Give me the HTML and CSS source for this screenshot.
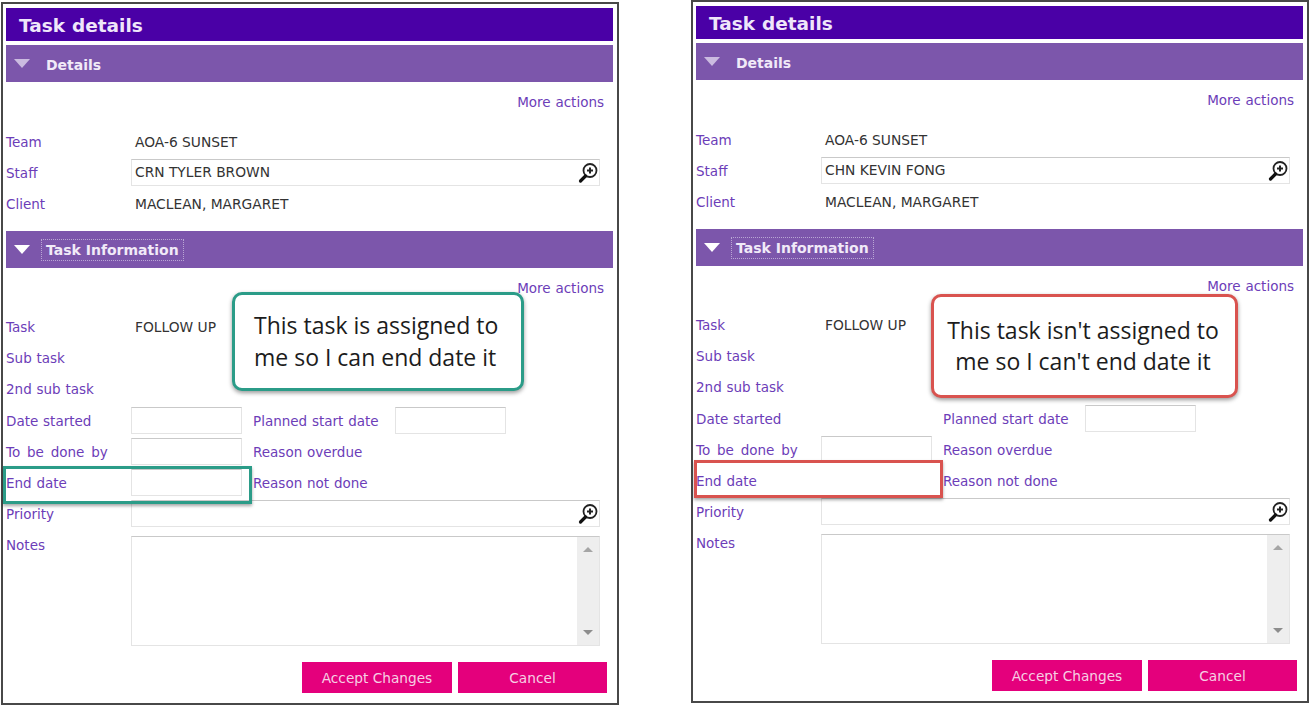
FILE: index.html
```html
<!DOCTYPE html>
<html lang="en">
<head>
  <meta charset="UTF-8"/>
  <title>Task details</title>
  <link rel="stylesheet" href="styles.css">
</head>
<body>

  <svg class="defs" width="0" height="0">
    <symbol id="lookup" viewBox="0 0 22 22">
      <circle cx="13" cy="8.5" r="6.5" fill="#fff" stroke="#222" stroke-width="1.8"/>
      <path d="M13 5.5v6M10 8.5h6" stroke="#222" stroke-width="2"/>
      <path d="M8.5 14L3.5 19" stroke="#111" stroke-width="3.2" stroke-linecap="round"/>
    </symbol>
  </svg>

  <div class="panel panel-left">
    <h1 class="title-bar">Task details</h1>
    <div class="section-bar muted"><span class="arrow"></span><span class="section-name">Details</span></div>
    <div class="more">More actions</div>
    <div class="block-top">
      <div class="row"><span class="label">Team</span><span class="value">AOA-6 SUNSET</span></div>
      <div class="row"><span class="label">Staff</span><div class="field">CRN TYLER BROWN<svg class="lookup"><use href="#lookup"/></svg></div></div>
      <div class="row"><span class="label">Client</span><span class="value">MACLEAN, MARGARET</span></div>
    </div>
    <div class="section-bar"><span class="arrow"></span><span class="section-name focus">Task Information</span></div>
    <div class="more">More actions</div>
    <div class="block-task">
      <div class="row"><span class="label">Task</span><span class="value">FOLLOW UP</span></div>
      <div class="row"><span class="label">Sub task</span></div>
      <div class="row"><span class="label">2nd sub task</span></div>
      <div class="row dates-start"><span class="label">Date started</span><div class="date"></div><span class="label second">Planned start date</span><div class="date"></div></div>
      <div class="row"><span class="label wide-words">To be done by</span><div class="date"></div><span class="label second">Reason overdue</span></div>
      <div class="row"><span class="label">End date</span><div class="date"></div><span class="label second">Reason not done</span></div>
      <div class="row"><span class="label">Priority</span><div class="field"><svg class="lookup"><use href="#lookup"/></svg></div></div>
      <div class="row notes-row"><span class="label">Notes</span>
        <div class="notes"><div class="scroll"><span class="up"></span><span class="down"></span></div></div>
      </div>
    </div>
    <div class="actions"><button class="btn accept">Accept Changes</button><button class="btn cancel">Cancel</button></div>
    <div class="callout green">This task is assigned to<br>me so I can end date it</div>
    <div class="highlight green"></div>
  </div>

  <div class="panel panel-right">
    <h1 class="title-bar">Task details</h1>
    <div class="section-bar muted"><span class="arrow"></span><span class="section-name">Details</span></div>
    <div class="more">More actions</div>
    <div class="block-top">
      <div class="row"><span class="label">Team</span><span class="value">AOA-6 SUNSET</span></div>
      <div class="row"><span class="label">Staff</span><div class="field">CHN KEVIN FONG<svg class="lookup"><use href="#lookup"/></svg></div></div>
      <div class="row"><span class="label">Client</span><span class="value">MACLEAN, MARGARET</span></div>
    </div>
    <div class="section-bar"><span class="arrow"></span><span class="section-name focus">Task Information</span></div>
    <div class="more">More actions</div>
    <div class="block-task">
      <div class="row"><span class="label">Task</span><span class="value">FOLLOW UP</span></div>
      <div class="row"><span class="label">Sub task</span></div>
      <div class="row"><span class="label">2nd sub task</span></div>
      <div class="row dates-start"><span class="label">Date started</span><div class="date blank"></div><span class="label second">Planned start date</span><div class="date"></div></div>
      <div class="row"><span class="label wide-words">To be done by</span><div class="date"></div><span class="label second">Reason overdue</span></div>
      <div class="row"><span class="label">End date</span><div class="date blank"></div><span class="label second">Reason not done</span></div>
      <div class="row"><span class="label">Priority</span><div class="field"><svg class="lookup"><use href="#lookup"/></svg></div></div>
      <div class="row notes-row"><span class="label">Notes</span>
        <div class="notes"><div class="scroll"><span class="up"></span><span class="down"></span></div></div>
      </div>
    </div>
    <div class="actions"><button class="btn accept">Accept Changes</button><button class="btn cancel">Cancel</button></div>
    <div class="callout red">This task isn't assigned to<br>me so I can't end date it</div>
    <div class="highlight red"></div>
  </div>

</body>
</html>
```

FILE: styles.css
```css
:root {
  --title: #4a00a6;
  --section: #7c56ab;
  --link: #6c3db8;
  --ink: #333333;
  --pink: #e4007c;
  --line: #e4e4e4;
  --line-top: #c9c9c9;
  --green: #2b9c88;
  --red: #d9534f;
}
* { box-sizing: border-box; margin: 0; padding: 0 }
html, body { height: 706px; overflow: hidden }
body {
  background: #fff;
  display: flex;
  gap: 72px;
  padding-left: 1px;
  font-family: "DejaVu Sans", sans-serif;
  font-size: 13.5px;
  word-spacing: .5px;
  color: var(--ink);
}
.defs { position: absolute }
.panel {
  position: relative;
  width: 618px;
  height: 703px;
  flex: none;
  padding: 4px 4px 0 3px;
  border: 2px solid #484848;
}
.panel-left { margin-top: 2px }

.title-bar {
  height: 33px;
  padding-left: 13px;
  background: var(--title);
  color: #efe6fa;
  font-size: 18.5px;
  font-weight: 700;
  line-height: 35px;
}
.section-bar {
  height: 37px;
  margin-top: 4px;
  background: var(--section);
  display: flex;
  align-items: center;
  color: #f1eaf8;
  font-size: 14px;
  font-weight: 700;
  word-spacing: 0;
}
.muted .section-name { padding-top: 2px }
.arrow {
  width: 0; height: 0;
  margin-left: 8px;
  margin-right: 16px;
  border-left: 8px solid transparent;
  border-right: 8px solid transparent;
  border-top: 9px solid #fff;
}
.muted .arrow { border-top-color: #cbbbe0 }
.section-name.focus {
  margin-left: -5px;
  padding: 2px 4px;
  border: 1px dotted #b9a6d4;
}

.more {
  height: 31px;
  padding-right: 9px;
  margin-top: 4px;
  color: var(--link);
  text-align: right;
  line-height: 32px;
}
.block-top { margin-top: 9px; margin-bottom: 12px }
.block-task { margin-top: 8px }
.row {
  height: 31px;
  display: flex;
  align-items: center;
}
.dates-start { margin-top: 1px }
.label {
  width: 125px;
  flex: none;
  color: var(--link);
}
.label.wide-words { word-spacing: 2.5px }
.label.second { width: 142px; margin-left: 11px }
.value { padding-left: 4px; font-size: 13.8px; word-spacing: 0 }
.field {
  position: relative;
  width: 469px;
  height: 27px;
  padding-left: 3px;
  border: 1px solid var(--line);
  border-top-color: var(--line-top);
  font-size: 13.8px;
  word-spacing: 0;
  line-height: 25px;
}
.lookup {
  position: absolute;
  top: 2px;
  right: 0;
  width: 22px;
  height: 22px;
}
.date {
  width: 111px;
  height: 27px;
  flex: none;
  border: 1px solid var(--line);
  border-top-color: var(--line-top);
}
.date.blank { border-color: transparent }
.notes-row { height: 118px; align-items: flex-start; padding-top: 7px }
.notes-row .label { margin-top: 1px }
.notes {
  position: relative;
  width: 469px;
  height: 110px;
  border: 1px solid var(--line);
  border-top-color: var(--line-top);
}
.scroll {
  position: absolute;
  top: 0; right: 0; bottom: 0;
  width: 22px;
  background: #eeeeee;
}
.up, .down {
  position: absolute;
  left: 6px;
  width: 0; height: 0;
  border-left: 5px solid transparent;
  border-right: 5px solid transparent;
}
.up { top: 10px; border-bottom: 5px solid #a5a5a5 }
.down { bottom: 10px; border-top: 5px solid #8d8d8d }

.actions {
  display: flex;
  justify-content: flex-end;
  gap: 6px;
  margin-top: 15px;
  padding-right: 6px;
}
.btn {
  height: 31px;
  background: var(--pink);
  border: none;
  color: #f6cfe3;
  font: 13.7px "DejaVu Sans", sans-serif;
}
.accept { width: 150px }
.cancel { width: 149px }

/* annotations drawn over the screenshot */
.callout {
  position: absolute;
  background: #fff;
  border: 3px solid;
  border-radius: 10px;
  box-shadow: 0 2px 4px rgba(0,0,0,.4);
  font-family: "Open Sans", sans-serif;
  font-size: 23px;
  word-spacing: 0;
  line-height: 32px;
  color: #1c1c1c;
}
.callout.green {
  left: 229px; top: 288px;
  width: 292px; height: 99px;
  padding: 14px 0 0 19px;
  border-color: var(--green);
}
.callout.red {
  left: 238px; top: 292px;
  width: 307px; height: 104px;
  padding: 18px 3px 0 0;
  border-color: var(--red);
  line-height: 31px;
  text-align: center;
}
.highlight {
  position: absolute;
  border: 3px solid;
  box-shadow: 0 2px 3px rgba(0,0,0,.35);
}
.highlight.green {
  left: 0; top: 462px;
  width: 249px; height: 38px;
  border-color: var(--green);
}
.highlight.red {
  left: 1px; top: 458px;
  width: 249px; height: 38px;
  border-color: var(--red);
}
```
